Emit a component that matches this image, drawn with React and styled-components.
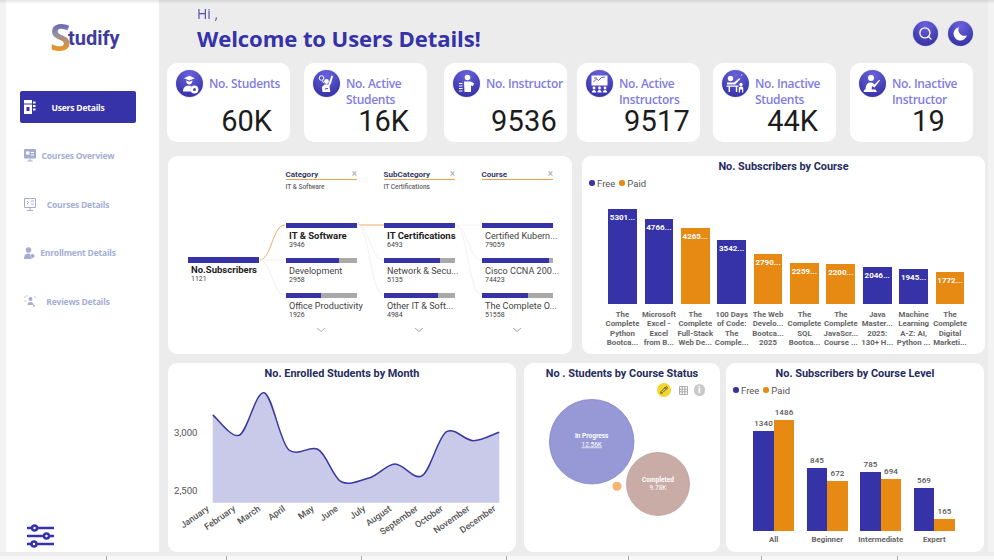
import React from 'react';
import styled, { createGlobalStyle } from 'styled-components';
import { Search, Pencil } from 'lucide-react';

const INDIGO = '#3632a8';
const ORANGE = '#e68a14';
const DIN = "Roboto, 'Liberation Sans', sans-serif";
const SEGOE = "'Open Sans', 'Liberation Sans', sans-serif";

const GlobalStyle = createGlobalStyle`
  html, body {
    margin: 0;
    padding: 0;
    background: #f4f4f4;
  }
  * { box-sizing: border-box; }
`;

const Page = styled.div`
  position: relative;
  width: 994px;
  height: 560px;
  overflow: hidden;
  background: #f3f3f3;
  font-family: ${SEGOE};
  &::before {
    content: '';
    position: absolute;
    left: 0;
    right: 0;
    top: 0;
    height: 4px;
    z-index: 2;
    background: linear-gradient(rgba(0, 0, 0, 0.1), rgba(0, 0, 0, 0));
  }
`;

const Shell = styled.div`
  display: flex;
  height: 552px;
  padding: 0 6px;
`;

const Sidebar = styled.aside`
  display: flex;
  flex-direction: column;
  width: 153px;
  background: #fff;
  padding: 0 23px 4px 14px;
`;

const Logo = styled.div`
  display: flex;
  align-items: center;
  height: 91px;
  padding: 0 0 20px 30px;
  font-weight: 700;
`;

const LogoS = styled.span`
  font-size: 38px;
  line-height: 40px;
  font-family: ${SEGOE};
  background: linear-gradient(#5a54bb 10%, #8f8fa8 45%, #ee9320 85%);
  -webkit-background-clip: text;
  background-clip: text;
  color: transparent;
`;

const LogoText = styled.span`
  font-family: ${DIN};
  font-size: 20px;
  line-height: 24px;
  color: #3f3b9e;
  margin: 4px 0 0 -3px;
`;

const Nav = styled.nav`
  display: flex;
  flex-direction: column;
  gap: 16.5px;
`;

const NavItem = styled.a`
  display: grid;
  grid-template-columns: 14px 1fr 14px;
  align-items: center;
  height: 32px;
  padding: 0 4px;
  border-radius: 2px;
  background: ${(p) => (p.$active ? INDIGO : 'transparent')};
  color: ${(p) => (p.$active ? '#fff' : '#a5aed2')};
  font-size: 8.5px;
  font-weight: 700;
  letter-spacing: -0.2px;
  white-space: nowrap;
`;

const NavLabel = styled.span`
  text-align: center;
`;

const Settings = styled.div`
  margin: auto 0 0 7px;
  line-height: 0;
`;

const Main = styled.main`
  flex: 1;
  display: flex;
  flex-direction: column;
  background: #ececec;
`;

const Header = styled.header`
  display: flex;
  justify-content: space-between;
  align-items: flex-start;
  height: 63px;
  padding: 0 15px 0 38px;
`;

const Greeting = styled.div`
  padding-top: 4px;
  color: ${INDIGO};
`;

const Hi = styled.div`
  font-size: 14px;
  line-height: 19px;
  font-weight: 400;
  opacity: 0.85;
`;

const Title = styled.h1`
  margin: 0;
  font-size: 22.1px;
  line-height: 30px;
  font-weight: 700;
  letter-spacing: -0.1px;
`;

const HeaderTools = styled.div`
  display: flex;
  gap: 10px;
  padding-top: 21px;
`;

const RoundIcon = styled.span`
  display: flex;
  align-items: center;
  justify-content: center;
  flex: none;
  width: ${(p) => p.$size}px;
  height: ${(p) => p.$size}px;
  border-radius: 50%;
  background: radial-gradient(circle at 50% 20%, #6a62dc, #3b37aa 75%);
  box-shadow: 0 0 1px #8884e0;
`;

const KpiRow = styled.section`
  display: flex;
  padding-left: 8px;
  height: 79px;
`;

const Kpi = styled.div`
  display: flex;
  flex-direction: column;
  justify-content: space-between;
  width: 123px;
  margin-left: ${(p) => p.$gap}px;
  padding: 7px 0 8px 9px;
  border-radius: 10px;
  background: #fff;
`;

const KpiHead = styled.div`
  display: flex;
  gap: 6px;
  height: 38px;
`;

const KpiLabel = styled.div`
  padding-top: 6px;
  font-size: 12px;
  line-height: 16px;
  font-weight: 600;
  letter-spacing: -0.3px;
  color: #7f7ce4;
  white-space: nowrap;
`;

const KpiValue = styled.div`
  align-self: flex-end;
  padding-right: ${(p) => p.$right}px;
  font-family: ${DIN};
  font-size: 29px;
  line-height: 26px;
  font-weight: 400;
  color: #1c1c1c;
  letter-spacing: ${(p) => (p.$digits ? '0.2px' : '0')};
`;

const ChartRow = styled.section`
  display: grid;
  grid-template-columns: ${(p) => p.$columns};
  column-gap: ${(p) => p.$gap}px;
  height: ${(p) => p.$height}px;
  margin-top: ${(p) => p.$top}px;
  padding-left: 9px;
`;

const Card = styled.div`
  position: relative;
  display: flex;
  flex-direction: column;
  margin-left: ${(p) => p.$inset || 0}px;
  background: #fff;
  border-radius: 9px;
  min-width: 0;
`;

const ChartTitle = styled.h2`
  display: flex;
  align-items: center;
  justify-content: center;
  height: 20px;
  margin: 0;
  font-family: ${DIN};
  font-size: 10.9px;
  font-weight: 700;
  color: #252b5e;
  white-space: nowrap;
`;

const Legend = styled.div`
  display: flex;
  align-items: center;
  gap: 4px;
  height: 14px;
  padding-left: ${(p) => p.$left}px;
  font-family: ${DIN};
  font-size: 9.5px;
  color: #555;
`;

const Dot = styled.i`
  width: 5.5px;
  height: 5.5px;
  border-radius: 50%;
  background: ${(p) => p.$color};
  margin-right: -1.5px;
`;

/* decomposition tree */
const Tree = styled.div`
  display: grid;
  grid-template-columns: repeat(4, 71.5px);
  column-gap: 26.5px;
  padding: 13px 0 0 19.5px;
`;

const TreeColumn = styled.div`
  display: flex;
  flex-direction: column;
  padding-top: ${(p) => p.$top || 0}px;
  min-width: 0;
`;

const TreeHead = styled.div`
  height: 53.5px;
`;

const TreeHeadTitle = styled.div`
  display: flex;
  justify-content: space-between;
  align-items: center;
  height: 10px;
  border-bottom: 1px solid #eda050;
  box-sizing: content-box;
  font-family: ${DIN};
  font-size: 8px;
  font-weight: 700;
  color: #363b66;
  span:last-child {
    color: #a8a8a8;
    font-size: 10px;
    font-weight: 400;
    line-height: 10px;
  }
`;

const TreeHeadSub = styled.div`
  margin-top: 2px;
  font-family: ${DIN};
  font-size: 6.5px;
  line-height: 10px;
  font-weight: 500;
  color: #666;
`;

const TreeNode = styled.div`
  height: 35px;
`;

const TreeBar = styled.div`
  height: 5.5px;
  background: #a9a9a9;
  div {
    height: 100%;
    background: ${INDIGO};
  }
`;

const TreeName = styled.div`
  margin: 1.5px 0 0 3.5px;
  font-size: ${(p) => (p.$bold ? '9.5px' : '9.1px')};
  line-height: 12px;
  font-family: ${DIN};
  font-weight: ${(p) => (p.$bold ? 700 : 400)};
  color: ${(p) => (p.$bold ? '#222' : '#444')};
  white-space: nowrap;
`;

const TreeCount = styled.div`
  margin-left: 3.5px;
  font-family: ${DIN};
  font-size: 7px;
  line-height: 7px;
  color: #444;
`;

const Chevron = styled.svg`
  display: block;
  margin: -1px auto 0;
`;

const Links = styled.svg`
  position: absolute;
  left: 0;
  top: 0;
  pointer-events: none;
`;

/* column charts */
const Plot = styled.div`
  display: flex;
  align-items: flex-end;
  height: ${(p) => p.$height}px;
  padding-left: ${(p) => p.$left}px;
`;

const CourseCell = styled.div`
  display: flex;
  justify-content: center;
  width: 36.4px;
`;

const CourseBar = styled.div`
  width: 28.7px;
  padding-top: 4px;
  text-align: center;
  background: ${(p) => p.$color};
  color: #fff;
  font-family: ${DIN};
  font-size: 8px;
  line-height: 9px;
  font-weight: 700;
`;

const AxisRow = styled.div`
  display: flex;
  padding-left: ${(p) => p.$left}px;
  padding-top: ${(p) => p.$top}px;
`;

const AxisCell = styled.div`
  width: ${(p) => p.$width}px;
  flex: none;
  display: flex;
  flex-direction: column;
  align-items: center;
  font-family: ${DIN};
  font-size: 7.8px;
  line-height: 9.3px;
  font-weight: 700;
  color: #666;
  white-space: nowrap;
`;

const LevelGroup = styled.div`
  display: flex;
  justify-content: center;
  align-items: flex-end;
  width: 53.5px;
`;

const LevelColumn = styled.div`
  display: flex;
  flex-direction: column;
  align-items: center;
  width: 20.5px;
  font-family: ${DIN};
  font-size: 8px;
  line-height: 10px;
  font-weight: 500;
  color: #555;
  letter-spacing: 0.1px;
`;

const LevelBar = styled.div`
  width: 100%;
  margin-top: 2px;
  background: ${(p) => p.$color};
`;

const ChartSvg = styled.svg`
  display: block;
  flex: none;
`;

const BubbleTools = styled.div`
  display: flex;
  justify-content: flex-end;
  align-items: center;
  gap: 6px;
  height: 14px;
  padding-right: 15px;
`;

const PencilBadge = styled.span`
  display: flex;
  align-items: center;
  justify-content: center;
  width: 14px;
  height: 14px;
  margin-right: 2px;
  border-radius: 50%;
  background: #f2d530;
`;

const InfoBadge = styled.span`
  display: flex;
  align-items: center;
  justify-content: center;
  width: 11.5px;
  height: 11.5px;
  border-radius: 50%;
  background: #c9c9c9;
  color: #fff;
  font-family: ${DIN};
  font-size: 9px;
  font-weight: 900;
`;

const Footer = styled.footer`
  display: flex;
  align-items: flex-end;
  height: 8px;
  background: linear-gradient(#ebebeb 40%, #f8f8f8 60%);
`;

const Tick = styled.span`
  flex: none;
  width: ${(p) => p.$width}px;
  height: 4px;
  border-right: 1px solid #a8a8a8;
`;

const Glyph = ({ children, size = 27, box = 27, fill = '#fff' }) => (
  <svg width={size} height={size} viewBox={`0 0 ${box} ${box}`} fill={fill}>
    {children}
  </svg>
);

const kpiIcons = [
  <Glyph key="s">
    <path d="M8 8.2l5.4-2.4 5.4 2.4-5.4 2.2z" />
    <path d="M10 10.6c.6 3 1.6 4 3.2 4s2.8-1 3.4-4l-3.3 1.2z" />
    <path d="M7 21.5c0-3.8 2-5.8 6-5.8 1 0 1.8.1 2.5.4-1 1.5-1 3.7.2 5.4z" />
    <circle cx="18.5" cy="19.5" r="3.9" />
    <circle cx="18.5" cy="19.5" r="1.5" fill="#4a45bc" />
  </Glyph>,
  <Glyph key="a">
    <circle cx="8.5" cy="8" r="2.3" fill="none" stroke="#fff" />
    <path d="M9.5 10.5l1 2.5" stroke="#fff" fill="none" />
    <circle cx="13.5" cy="11.5" r="2.4" />
    <path d="M18.5 5.5l1.6.6-2 7-1.6 3.5.8 5.4H9.5l-.6-5 3-2.8 3.5.3z" />
    <path d="M12 19l3-.5" stroke="#4a45bc" fill="none" />
  </Glyph>,
  <Glyph key="i">
    <circle cx="14.5" cy="7.5" r="2.8" />
    <path d="M11 11.5h6.5l3.5 1.8-1 2.7-2-.6v6.6h-6.5z" />
    <path d="M6 13h3.5v1H6zM6 15.5h3.5v1H6zM6 18h3.5v1H6zM6 20.5h3.5v1H6z" />
  </Glyph>,
  <Glyph key="ai">
    <path d="M5.5 5.5h16v10h-16z" />
    <path d="M7.5 12l3-3 2 1.5 3-3 3.5-.5M8 8h3" stroke="#4a45bc" strokeWidth=".9" fill="none" />
    <circle cx="8" cy="18" r="1.4" />
    <circle cx="13.5" cy="18" r="1.4" />
    <circle cx="19" cy="18" r="1.4" />
    <path d="M5.8 22.5c0-1.5 1-2.5 2.2-2.5s2.2 1 2.2 2.5zM11.3 22.5c0-1.5 1-2.5 2.2-2.5s2.2 1 2.2 2.5zM16.8 22.5c0-1.5 1-2.5 2.2-2.5s2.2 1 2.2 2.5z" />
  </Glyph>,
  <Glyph key="is">
    <circle cx="8.5" cy="8.5" r="2.7" />
    <path d="M5 12.5h7l5.5-4.5.8.9-5 5.6H5z" />
    <path d="M19 5l.8-.8.8.8-.8.8z" />
    <path d="M4.5 15.5h12v1.3h-1.3V22h-1.4v-5.2H8V22H6.6v-5.2H4.5z" />
    <circle cx="19" cy="14.5" r="1.7" />
    <path d="M16.8 22.5v-4.5c0-1 1-1.5 2.2-1.5s2.2.5 2.2 1.5v4.5h-1.2v-3h-2v3z" />
  </Glyph>,
  <Glyph key="ii">
    <circle cx="12" cy="8" r="3" />
    <path d="M6.5 20.5c0-5 1.5-8 5-8 2 0 3 .8 4 2l4.7-4.7.8.8-5.5 6.9-2.5-1.5-.5 4.5z" />
    <path d="M5.5 19.5h11l1.5 2.5H4.5z" />
  </Glyph>
];

const kpis = [
  { label: ['No. Students'], value: '60K', gap: 0, right: 18, icon: 0 },
  { label: ['No. Active', 'Students'], value: '16K', gap: 14, right: 18, icon: 1 },
  { label: ['No. Instructor'], value: '9536', gap: 17, right: 10, digits: true, icon: 2 },
  { label: ['No. Active', 'Instructors'], value: '9517', gap: 10, right: 10, digits: true, icon: 3 },
  { label: ['No. Inactive', 'Students'], value: '44K', gap: 13, right: 18, icon: 4 },
  { label: ['No. Inactive', 'Instructor'], value: '19', gap: 14, right: 28, digits: true, icon: 5 }
];

const navIcons = {
  users: (c) => (
    <svg width="12" height="14" viewBox="0 0 12 14" fill={c}>
      <path d="M0 0h8v14H0zM9 1.5h2.5v2H9zM9 5h2.5v2H9zM9 8.5h2.5v2H9z" />
      <path d="M0 3.5h8v1H0z" fill={INDIGO} />
      <rect x="2.5" y="7" width="3" height="4" fill={INDIGO} />
    </svg>
  ),
  overview: (c) => (
    <svg width="12" height="13" viewBox="0 0 12 13" fill={c}>
      <path d="M0 1a1 1 0 0 1 1-1h10a1 1 0 0 1 1 1v7.5a1 1 0 0 1-1 1H1a1 1 0 0 1-1-1z" />
      <path d="M2 2.5h3.5v3H2zM7 3h3v1H7zM7 5.5h3v1H7z" fill="#fff" />
      <path d="M5.5 9.5h1v2h2v1h-5v-1h2z" />
    </svg>
  ),
  courses: (c) => (
    <svg width="12" height="13" viewBox="0 0 12 13" fill="none" stroke={c}>
      <path d="M.5.5h11v9H.5z" />
      <path d="M3 3l1.5 1.5L3 6M7 3h3M7 6h3M6 9.5V12M3 12.5h6" />
    </svg>
  ),
  enroll: (c) => (
    <svg width="11" height="12" viewBox="0 0 11 12" fill={c}>
      <circle cx="4.5" cy="3" r="2.8" />
      <path d="M0 12c0-4 1.5-5.5 4.5-5.5 1 0 1.500.2 2 .5C6 8.5 6.5 11 8 12z" />
      <circle cx="8.5" cy="9" r="2" />
    </svg>
  ),
  reviews: (c) => (
    <svg width="12" height="12" viewBox="0 0 12 12" fill={c}>
      <circle cx="6.5" cy="4" r="2" />
      <path d="M3.5 10c0-2 1-3 3-3s3 1 3 3z" />
      <circle cx="1" cy="2" r=".7" />
      <circle cx="1" cy="6" r=".7" />
      <circle cx="11" cy="2" r=".7" />
      <circle cx="3" cy=".8" r=".6" />
      <circle cx="10" cy="11" r="1" />
    </svg>
  )
};

const navItems = [
  { label: 'Users Details', icon: 'users', active: true },
  { label: 'Courses Overview', icon: 'overview' },
  { label: 'Courses Details', icon: 'courses' },
  { label: 'Enrollment Details', icon: 'enroll' },
  { label: 'Reviews Details', icon: 'reviews' }
];

const treeColumns = [
  {
    name: 'Category',
    picked: 'IT & Software',
    nodes: [
      { name: 'IT & Software', count: 3946, pct: 100, bold: true },
      { name: 'Development', count: 2958, pct: 75 },
      { name: 'Office Productivity', count: 1926, pct: 49 }
    ]
  },
  {
    name: 'SubCategory',
    picked: 'IT Certifications',
    nodes: [
      { name: 'IT Certifications', count: 6493, pct: 100, bold: true },
      { name: 'Network & Secu...', count: 5135, pct: 79 },
      { name: 'Other IT & Soft...', count: 4984, pct: 76.5 }
    ]
  },
  {
    name: 'Course',
    picked: '',
    nodes: [
      { name: 'Certified Kubern...', count: 79059, pct: 100 },
      { name: 'Cisco CCNA 200...', count: 74423, pct: 94 },
      { name: 'The Complete O...', count: 51558, pct: 65 }
    ]
  }
];

const courses = [
  { h: 94.4, v: '5301...', c: INDIGO, l: ['The', 'Complete', 'Python', 'Bootca...'] },
  { h: 85, v: '4766...', c: INDIGO, l: ['Microsoft', 'Excel -', 'Excel', 'from B...'] },
  { h: 76, v: '4265...', c: ORANGE, l: ['The', 'Complete', 'Full-Stack', 'Web De...'] },
  { h: 63.4, v: '3542...', c: INDIGO, l: ['100 Days', 'of Code:', 'The', 'Comple...'] },
  { h: 49.7, v: '2790...', c: ORANGE, l: ['The Web', 'Develo...', 'Bootca...', '2025'] },
  { h: 40.4, v: '2259...', c: ORANGE, l: ['The', 'Complete', 'SQL', 'Bootca...'] },
  { h: 39.4, v: '2200...', c: ORANGE, l: ['The', 'Complete', 'JavaScr...', 'Course ...'] },
  { h: 36.7, v: '2046...', c: INDIGO, l: ['Java', 'Master...', '2025:', '130+ H...'] },
  { h: 34.7, v: '1945...', c: INDIGO, l: ['Machine', 'Learning', 'A-Z: AI,', 'Python ...'] },
  { h: 31.7, v: '1772...', c: ORANGE, l: ['The', 'Complete', 'Digital', 'Marketi...'] }
];

const levels = [
  { name: 'All', free: 1340, paid: 1486, fh: 100.6, ph: 111.3 },
  { name: 'Beginner', free: 845, paid: 672, fh: 63.3, ph: 50.3 },
  { name: 'Intermediate', free: 785, paid: 694, fh: 59, ph: 52 },
  { name: 'Expert', free: 569, paid: 165, fh: 43, ph: 12.3 }
];

const months = [
  ['January', 44.7, 32],
  ['February', 71, 52.3],
  ['March', 96, 9.7],
  ['April', 121, 67],
  ['May', 149.7, 66.3],
  ['June', 173.7, 99],
  ['July', 201, 95],
  ['August', 227, 81],
  ['September', 253.7, 93],
  ['October', 278.7, 48.7],
  ['November', 305.3, 57.7],
  ['December', 331.3, 49.3]
];

// smooth line through the month points
const smoothPath = (pts) => {
  let d = `M${pts[0][0]} ${pts[0][1]}`;
  for (let i = 0; i < pts.length - 1; i++) {
    const p0 = pts[i - 1] || pts[i];
    const p1 = pts[i];
    const p2 = pts[i + 1];
    const p3 = pts[i + 2] || p2;
    const c1x = p1[0] + (p2[0] - p0[0]) / 6;
    const c1y = p1[1] + (p2[1] - p0[1]) / 8;
    const c2x = p2[0] - (p3[0] - p1[0]) / 6;
    const c2y = p2[1] - (p3[1] - p1[1]) / 8;
    d += ` C${c1x.toFixed(1)} ${c1y.toFixed(1)} ${c2x.toFixed(1)} ${c2y.toFixed(1)} ${p2[0]} ${p2[1]}`;
  }
  return d;
};

const LineChart = () => {
  const pts = months.map((m) => [m[1], m[2]]);
  const line = smoothPath(pts);
  const base = 119.7;
  const textStyle = { fontFamily: DIN, fill: '#555' };
  return (
    <ChartSvg width="348" height="169" viewBox="0 0 348 169">
      <path d={`${line} L${pts[11][0]} ${base} L${pts[0][0]} ${base} Z`} fill="#c9c9ea" />
      <path d={line} fill="none" stroke="#3a379f" strokeWidth="1.5" />
      <text x="6" y="52.5" fontSize="9.6" style={textStyle}>3,000</text>
      <text x="6" y="110.5" fontSize="9.6" style={textStyle}>2,500</text>
      {months.map((m) => (
        <text
          key={m[0]}
          x={m[1] - 3}
          y={127}
          fontSize="9"
          fontWeight="500"
          textAnchor="end"
          transform={`rotate(-35 ${m[1] - 3} 127)`}
          style={textStyle}
        >
          {m[0]}
        </text>
      ))}
    </ChartSvg>
  );
};

const BubbleChart = () => {
  const labelStyle = { fontFamily: DIN, fill: '#fff', textAnchor: 'middle' };
  return (
    <ChartSvg width="196" height="155" viewBox="0 0 196 155">
      <circle cx="67.7" cy="44.7" r="42.3" fill="#9799d6" stroke="#7c7ec4" strokeWidth=".7" />
      <circle cx="134" cy="87" r="31.5" fill="#c9aca6" stroke="#b89a94" strokeWidth=".7" />
      <circle cx="93" cy="89.3" r="4.5" fill="#f5b470" />
      <text x="67.7" y="41" fontSize="6.5" fontWeight="700" style={labelStyle}>In Progress</text>
      <text x="67.7" y="49.5" fontSize="6.5" textDecoration="underline" style={labelStyle}>12.56K</text>
      <text x="134" y="84.5" fontSize="6.5" fontWeight="700" style={labelStyle}>Completed</text>
      <text x="134" y="93" fontSize="6.5" style={labelStyle}>9.78K</text>
    </ChartSvg>
  );
};

export default function App() {
  return (
    <Page>
      <GlobalStyle />
      <Shell>
        <Sidebar>
          <Logo>
            <LogoS>S</LogoS>
            <LogoText>tudify</LogoText>
          </Logo>
          <Nav>
            {navItems.map((item) => (
              <NavItem key={item.label} $active={item.active}>
                {navIcons[item.icon](item.active ? '#fff' : '#a5aed2')}
                <NavLabel>{item.label}</NavLabel>
              </NavItem>
            ))}
          </Nav>
          <Settings>
            <svg width="27" height="24" viewBox="0 0 27 24" fill="#fff" stroke={INDIGO} strokeWidth="2.6">
              <path d="M0 4h27M0 12h27M0 20h27" strokeWidth="2.4" />
              <circle cx="7.5" cy="4" r="2.5" />
              <circle cx="19.5" cy="12" r="2.5" />
              <circle cx="7" cy="20" r="2.5" />
            </svg>
          </Settings>
        </Sidebar>
        <Main>
          <Header>
            <Greeting>
              <Hi>Hi ,</Hi>
              <Title>Welcome to Users Details!</Title>
            </Greeting>
            <HeaderTools>
              <RoundIcon $size={25}>
                <Search size={15} color="#fff" strokeWidth={2.2} />
              </RoundIcon>
              <RoundIcon $size={25}>
                <Glyph size={17} box={24}>
                  <path d="M10 3a9.5 9.5 0 1 0 11 11.5A8.5 8.5 0 0 1 10 3z" />
                </Glyph>
              </RoundIcon>
            </HeaderTools>
          </Header>

          <KpiRow>
            {kpis.map((k) => (
              <Kpi key={k.value} $gap={k.gap}>
                <KpiHead>
                  <RoundIcon $size={27}>{kpiIcons[k.icon]}</RoundIcon>
                  <KpiLabel>
                    {k.label.map((line) => (
                      <div key={line}>{line}</div>
                    ))}
                  </KpiLabel>
                </KpiHead>
                <KpiValue $right={k.right} $digits={k.digits}>{k.value}</KpiValue>
              </Kpi>
            ))}
          </KpiRow>

          <ChartRow $columns="404px 403px" $gap={10} $height={198} $top={14}>
            <Card>
              <Links width="404" height="198" viewBox="0 0 404 198" fill="none">
                <path d="M91 104C104 104 104 69 117 69" stroke="#f0a860" strokeWidth="1" />
                <path d="M189 69H216" stroke="#f0a860" strokeWidth="1" />
                <path d="M91 104H117M91 104C104 104 104 139 117 139M189 69C202 69 202 104 216 104M189 69C202 69 202 139 216 139M287 69H314M287 69C300 69 300 104 314 104M287 69C300 69 300 139 314 139" stroke="#f2f2f2" strokeWidth="1" />
              </Links>
              <Tree>
                <TreeColumn $top={88.3}>
                  <TreeNode>
                    <TreeBar><div style={{ width: '100%' }} /></TreeBar>
                    <TreeName $bold>No.Subscribers</TreeName>
                    <TreeCount>1121</TreeCount>
                  </TreeNode>
                </TreeColumn>
                {treeColumns.map((col) => (
                  <TreeColumn key={col.name}>
                    <TreeHead>
                      <TreeHeadTitle>
                        <span>{col.name}</span>
                        <span>×</span>
                      </TreeHeadTitle>
                      <TreeHeadSub>{col.picked}</TreeHeadSub>
                    </TreeHead>
                    {col.nodes.map((n) => (
                      <TreeNode key={n.name}>
                        <TreeBar><div style={{ width: `${n.pct}%` }} /></TreeBar>
                        <TreeName $bold={n.bold}>{n.name}</TreeName>
                        <TreeCount>{n.count}</TreeCount>
                      </TreeNode>
                    ))}
                    <Chevron width="10" height="6" viewBox="0 0 10 6" fill="none" stroke="#aaa">
                      <path d="M1 1l4 3.5L9 1" />
                    </Chevron>
                  </TreeColumn>
                ))}
              </Tree>
            </Card>

            <Card>
              <ChartTitle>No. Subscribers by Course</ChartTitle>
              <Legend $left={7}>
                <Dot $color={INDIGO} />Free<Dot $color={ORANGE} />Paid
              </Legend>
              <Plot $height={113.7} $left={22.3}>
                {courses.map((c) => (
                  <CourseCell key={c.v}>
                    <CourseBar $color={c.c} style={{ height: c.h }}>{c.v}</CourseBar>
                  </CourseCell>
                ))}
              </Plot>
              <AxisRow $left={22.3} $top={6.5}>
                {courses.map((c) => (
                  <AxisCell key={c.v} $width={36.4}>
                    {c.l.map((line) => (
                      <span key={line}>{line}</span>
                    ))}
                  </AxisCell>
                ))}
              </AxisRow>
            </Card>
          </ChartRow>

          <ChartRow $columns="348px 198px 258px" $gap={6} $height={189} $top={9}>
            <Card>
              <ChartTitle>No. Enrolled Students by Month</ChartTitle>
              <LineChart />
            </Card>
            <Card $inset={2}>
              <ChartTitle>No . Students by Course Status</ChartTitle>
              <BubbleTools>
                <PencilBadge>
                  <Pencil size={8} color="#444" strokeWidth={2.5} />
                </PencilBadge>
                <svg width="9" height="9" viewBox="0 0 9 9" fill="none" stroke="#9a9a9a" strokeWidth=".8">
                  <path d="M.5.5h8v8h-8zM3.2.5v8M5.8.5v8M.5 3.2h8M.5 5.8h8" />
                </svg>
                <InfoBadge>i</InfoBadge>
              </BubbleTools>
              <BubbleChart />
            </Card>
            <Card>
              <ChartTitle>No. Subscribers by Course Level</ChartTitle>
              <Legend $left={7}>
                <Dot $color={INDIGO} />Free<Dot $color={ORANGE} />Paid
              </Legend>
              <Plot $height={134.3} $left={21}>
                {levels.map((lv) => (
                  <LevelGroup key={lv.name}>
                    <LevelColumn>
                      {lv.free}
                      <LevelBar $color={INDIGO} style={{ height: lv.fh }} />
                    </LevelColumn>
                    <LevelColumn>
                      {lv.paid}
                      <LevelBar $color={ORANGE} style={{ height: lv.ph }} />
                    </LevelColumn>
                  </LevelGroup>
                ))}
              </Plot>
              <AxisRow $left={21} $top={3.5}>
                {levels.map((lv) => (
                  <AxisCell key={lv.name} $width={53.5}>{lv.name}</AxisCell>
                ))}
              </AxisRow>
            </Card>
          </ChartRow>
        </Main>
      </Shell>
      <Footer>
        {[107, 120, 135, 145, 122, 133, 136].map((w) => (
          <Tick key={w} $width={w} />
        ))}
      </Footer>
    </Page>
  );
}
